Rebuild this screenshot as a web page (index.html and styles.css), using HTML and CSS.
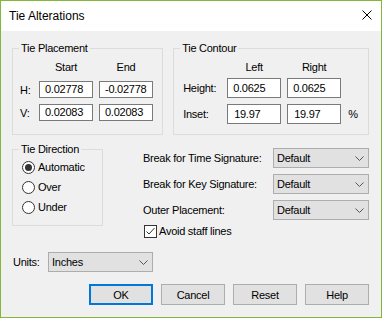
FILE: index.html
```html
<!DOCTYPE html>
<html>
<head>
<meta charset="utf-8">
<link rel="stylesheet" href="styles.css">
</head>
<body>
<div class="window">
  <div class="titlebar">
    <span class="title">Tie Alterations</span>
    <svg class="close" width="10" height="10" viewBox="0 0 10 10"><path d="M0.5 0.5 L9.5 9.5 M9.5 0.5 L0.5 9.5" stroke="#000" stroke-width="1" fill="none"/></svg>
  </div>
  <div class="content">
    <div class="top-row">
      <section class="group placement">
        <div class="group-title">Tie Placement</div>
        <div class="grid placement-grid">
          <span></span><span class="col-head">Start</span><span class="col-head">End</span>
          <span class="lbl">H:</span><div class="field">0.02778</div><div class="field">-0.02778</div>
          <span class="lbl">V:</span><div class="field">0.02083</div><div class="field">0.02083</div>
        </div>
      </section>
      <section class="group contour">
        <div class="group-title">Tie Contour</div>
        <div class="grid contour-grid">
          <span></span><span class="col-head">Left</span><span class="col-head">Right</span><span></span>
          <span class="lbl">Height:</span><div class="field tall">0.0625</div><div class="field tall">0.0625</div><span></span>
          <span class="lbl">Inset:</span><div class="field tall wide-pad">19.97</div><div class="field tall wide-pad">19.97</div><span class="lbl pct">%</span>
        </div>
      </section>
    </div>

    <div class="middle-row">
      <section class="group direction">
        <div class="group-title">Tie Direction</div>
        <div class="radios">
          <div class="radio-row">
            <svg class="radio" width="13" height="13" viewBox="0 0 13 13"><circle cx="6.5" cy="6.5" r="6" fill="#fff" stroke="#333"/><circle cx="6.5" cy="6.5" r="3.5" fill="#333"/></svg>
            <span>Automatic</span>
          </div>
          <div class="radio-row">
            <svg class="radio" width="13" height="13" viewBox="0 0 13 13"><circle cx="6.5" cy="6.5" r="6" fill="#fff" stroke="#333"/></svg>
            <span>Over</span>
          </div>
          <div class="radio-row">
            <svg class="radio" width="13" height="13" viewBox="0 0 13 13"><circle cx="6.5" cy="6.5" r="6" fill="#fff" stroke="#333"/></svg>
            <span>Under</span>
          </div>
        </div>
      </section>

      <div class="options">
        <div class="opt-grid">
          <span class="lbl">Break for Time Signature:</span>
          <div class="select"><span>Default</span><svg class="chev" width="9" height="5" viewBox="0 0 9 5"><polyline points="0.5,0.5 4.5,4.5 8.5,0.5" fill="none" stroke="#555"/></svg></div>
          <span class="lbl">Break for Key Signature:</span>
          <div class="select"><span>Default</span><svg class="chev" width="9" height="5" viewBox="0 0 9 5"><polyline points="0.5,0.5 4.5,4.5 8.5,0.5" fill="none" stroke="#555"/></svg></div>
          <span class="lbl">Outer Placement:</span>
          <div class="select"><span>Default</span><svg class="chev" width="9" height="5" viewBox="0 0 9 5"><polyline points="0.5,0.5 4.5,4.5 8.5,0.5" fill="none" stroke="#555"/></svg></div>
        </div>
        <div class="check-row">
          <svg class="check" width="13" height="13" viewBox="0 0 13 13"><rect x="0.5" y="0.5" width="12" height="12" fill="#fff" stroke="#333"/><polyline points="2.5,6.5 5,9 10.5,3" fill="none" stroke="#333"/></svg>
          <span>Avoid staff lines</span>
        </div>
      </div>
    </div>

    <div class="units-row">
      <span class="lbl units-lbl">Units:</span>
      <div class="select units-select"><span>Inches</span><svg class="chev" width="9" height="5" viewBox="0 0 9 5"><polyline points="0.5,0.5 4.5,4.5 8.5,0.5" fill="none" stroke="#555"/></svg></div>
    </div>

    <div class="buttons">
      <div class="btn default">OK</div>
      <div class="btn">Cancel</div>
      <div class="btn">Reset</div>
      <div class="btn">Help</div>
    </div>
  </div>
</div>
</body>
</html>
```

FILE: styles.css
```css
html, body {
  margin: 0;
  padding: 0;
}
body {
  font-family: "Liberation Sans", Arial, sans-serif;
  font-size: 11px;
  letter-spacing: -0.25px;
  color: #000;
  background: #f0f0f0;
}
.window {
  width: 382px;
  height: 318px;
  box-sizing: border-box;
  border: 1px solid #84b63c;
  background: #f0f0f0;
  display: flex;
  flex-direction: column;
}
.titlebar {
  height: 30px;
  flex: none;
  background: #fff;
  display: flex;
  align-items: center;
  justify-content: space-between;
  padding: 0 9px 0 8px;
}
.title {
  font-size: 12px;
  letter-spacing: 0;
}
.close {
  display: block;
  margin-bottom: 2px;
}
.content {
  padding: 0 12px 0 11px;
}
.top-row {
  display: flex;
  gap: 10px;
}
.group {
  box-sizing: border-box;
  border: 1px solid #dcdcdc;
  margin-top: 17px;
}
.group-title {
  margin: -8px 0 0 6px;
  padding: 0 2px;
  line-height: 15px;
  width: fit-content;
  background: #f0f0f0;
}
.placement {
  width: 152px;
  height: 87px;
}
.contour {
  width: 197px;
  height: 87px;
}
.grid {
  display: grid;
  column-gap: 6px;
  row-gap: 6px;
  align-items: center;
}
.placement-grid {
  margin-top: 4px;
  padding-left: 7px;
  grid-template-columns: 13px 54px 54px;
  grid-template-rows: 15px 17px 17px;
}
.contour-grid {
  margin-top: 4px;
  padding-left: 9px;
  grid-template-columns: 38px 54px 54px auto;
  grid-template-rows: 12px 20px 20px;
}
.col-head {
  text-align: center;
  line-height: 15px;
  align-self: start;
}
.lbl {
  white-space: nowrap;
}
.pct {
  margin-left: 1px;
}
.field {
  box-sizing: border-box;
  height: 17px;
  line-height: 15px;
  border: 1px solid #7a7a7a;
  background: #fff;
  padding-left: 5px;
  white-space: nowrap;
}
.field.tall {
  height: 20px;
  line-height: 18px;
}
.field.wide-pad {
  padding-left: 6px;
}
.middle-row {
  display: flex;
  align-items: flex-start;
}
.direction {
  width: 92px;
  height: 77px;
  margin-top: 14px;
}
.radios {
  padding-left: 9px;
}
.radio-row {
  height: 20px;
  display: flex;
  align-items: center;
  gap: 3px;
}
.radio {
  display: block;
  flex: none;
}
.options {
  margin-left: 40px;
  margin-top: 13px;
}
.opt-grid {
  display: grid;
  grid-template-columns: 130px 96px;
  grid-auto-rows: 20px;
  row-gap: 6px;
  align-items: center;
}
.select {
  box-sizing: border-box;
  height: 20px;
  border: 1px solid #adadad;
  background: #e1e1e1;
  display: flex;
  align-items: center;
  justify-content: space-between;
  padding: 0 4px 0 3px;
}
.chev {
  display: block;
}
.check-row {
  margin-top: 3px;
  height: 16px;
  display: flex;
  align-items: center;
  gap: 2px;
  padding-left: 1px;
}
.check {
  display: block;
  flex: none;
}
.units-row {
  margin-top: 13px;
  display: flex;
  align-items: center;
}
.units-lbl {
  width: 35px;
  padding-left: 1px;
}
.units-select {
  width: 105px;
}
.buttons {
  margin-top: 12px;
  display: flex;
  justify-content: flex-end;
  gap: 8px;
}
.btn {
  box-sizing: border-box;
  width: 64px;
  height: 21px;
  border: 1px solid #adadad;
  background: #e1e1e1;
  display: flex;
  align-items: center;
  justify-content: center;
}
.btn.default {
  border: 2px solid #0078d7;
}
```
